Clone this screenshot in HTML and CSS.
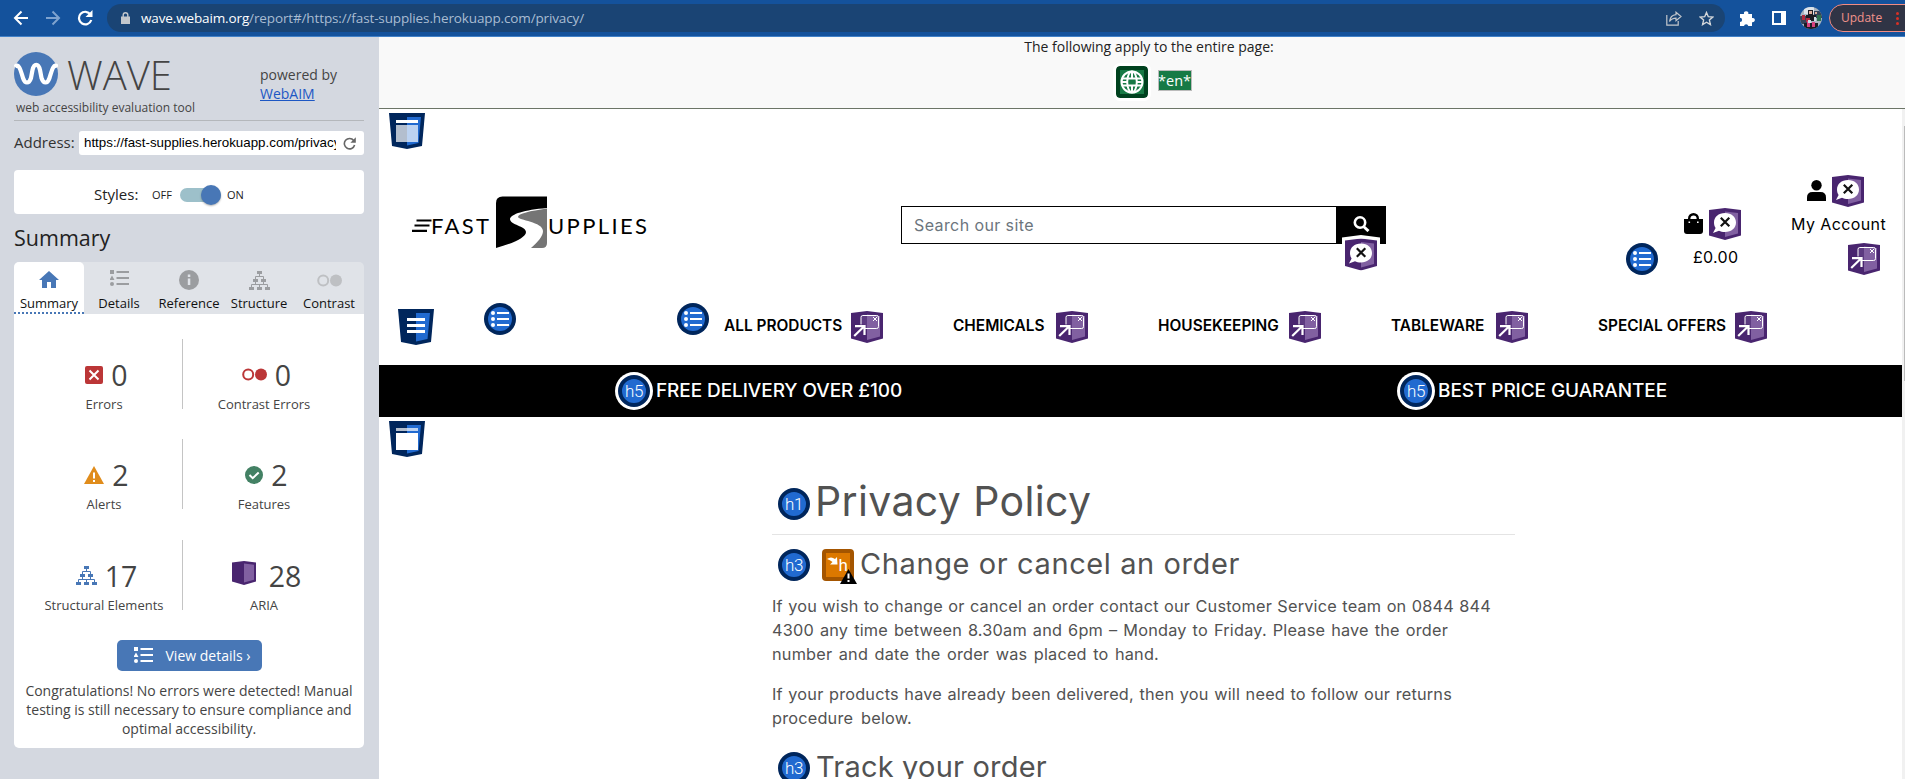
FILE: index.html
```html
<!DOCTYPE html>
<html lang="en">
<head>
<meta charset="utf-8">
<title>WAVE Report</title>
<link rel="stylesheet" href="styles.css">
</head>
<body>
<svg class="defs" width="0" height="0">
  <symbol id="speech" viewBox="0 0 32 32">
    <path fill="#49256f" d="M0 2 16 0l16 2v25.500L16 32 0 27.500z"/><path fill="#8160a1" d="M16 3.500 29 5v20.500L16 29z"/>
    <path fill="#fff" d="M16 5c6.500 0 11 4 11 9.500S22.500 24 16 24c-2.500 0-4.500-.5-6-1.300L4 25l2.600-5C5.500 18.500 5 16.500 5 14.500 5 9 9.500 5 16 5z"/>
    <path stroke="#111" stroke-width="2.200" d="m11.800 9.800 8.500 8.500m0-8.500-8.500 8.500"/>
  </symbol>
  <symbol id="link" viewBox="0 0 32 32">
    <path fill="#49256f" d="M0 2 16 0l16 2v25.500L16 32 0 27.500z"/><path fill="#8160a1" d="M16 3.500 29 5v20.500L16 29z"/>
    <rect x="10" y="4.500" width="17.500" height="13" rx="1.800" fill="#8160a1" fill-opacity=".35" stroke="#fff"/>
    <path fill="#49256f" d="M2.500 13.500H14v6h-3z"/>
    <path fill="none" stroke="#fff" stroke-width="1" d="m22 6 4 4m0-4-4 4"/>
    <path fill="none" stroke="#fff" stroke-width="2.200" d="M4 15.200h9.500V24M13 15.500 3.200 25"/>
  </symbol>
  <symbol id="list" viewBox="0 0 32 32">
    <circle cx="16" cy="16" r="16" fill="#00265c"/><circle cx="16" cy="16" r="12" fill="#216ad0"/>
    <path stroke="#fff" stroke-width="2" d="M13 10h12M13 16h12M13 22h12"/>
    <g fill="#fff"><circle cx="9" cy="10" r="2"/><circle cx="9" cy="16" r="2"/><circle cx="9" cy="22" r="2"/></g>
  </symbol>
  <symbol id="shield" viewBox="0 0 36 36">
    <path fill="#00265c" d="M0 0h36l-3 33-15 3-15-3z"/><path fill="#216ad0" d="M18 4h14l-2.500 26L18 32.500z"/>
  </symbol>
  <symbol id="tree" viewBox="0 0 21 19">
    <path fill="currentColor" d="M8 0h5v3H8zM4 8h5v3H4zM12 8h5v3h-5zM0 16h5v3H0zM8 16h5v3H8zM16 16h5v3h-5z"/>
    <path fill="none" stroke="currentColor" d="M10.500 3v2.500M6.500 8V5.500h8V8M6.500 11v2.500M14.500 11v2.500M2.500 16v-2.500h16V16M10.500 16v-2.500"/>
  </symbol>
  <symbol id="details" viewBox="0 0 19 16">
    <path fill="currentColor" d="M0 0h4v4H0zM2 5.500 4.500 10h-5zM6.500 1H19v2H6.500zM6.500 7H19v2H6.500zM6.500 13H19v2H6.500z"/><circle cx="2" cy="14" r="2" fill="currentColor"/>
  </symbol>
  <symbol id="pair" viewBox="0 0 25 13">
    <circle cx="6.200" cy="6.500" r="5" fill="none" stroke="currentColor" stroke-width="2"/><circle cx="19" cy="6.500" r="6" fill="currentColor"/>
  </symbol>
</svg>

<header class="chrome">
  <svg class="nav-btns" width="80" height="36" viewBox="0 0 80 36" fill="none" stroke-width="2">
    <path stroke="#fff" d="M28 18H15m6.500-6.500L15 18l6.500 6.500"/>
    <path stroke="#7fa3cf" d="M46 18h13m-6.500-6.500L59 18l-6.500 6.500"/>
  </svg>
  <svg class="reload" width="16" height="16" viewBox="0 0 16 16"><path fill="none" stroke="#fff" stroke-width="2.200" d="M13.500 4.500A6.300 6.300 0 1 0 14.300 10"/><path fill="#fff" d="M15.500 0v7h-7z"/></svg>
  <div class="omnibox">
    <svg width="9" height="12" viewBox="0 0 9 12"><path fill="#c3c7cc" d="M0 4.500h9V12H0z"/><path fill="none" stroke="#c3c7cc" stroke-width="1.400" d="M2.200 5V3a2.300 2.300 0 0 1 4.600 0v2"/></svg>
    <div class="url"><b>wave.webaim.org</b>/report#/https://fast-supplies.herokuapp.com/privacy/</div>
    <svg class="share" width="16" height="15" viewBox="0 0 16 15" fill="none" stroke="#c3c7cc" stroke-width="1.200"><path d="M.8 4v10.200h11.400V10"/><path d="M10 1.200 15 5.500l-5 4.300V7.200C7 7.200 5 8.200 3.500 10.500 4 7 6 4 10 3.700z"/></svg>
    <svg width="15" height="15" viewBox="0 0 15 15" fill="none" stroke="#d4d7da" stroke-width="1.400"><path d="m7.500 1.500 1.800 4.200 4.500.4-3.400 3 1 4.500-3.900-2.400-3.900 2.400 1-4.500-3.400-3 4.500-.4z"/></svg>
  </div>
  <svg class="puzzle" width="15" height="15" viewBox="0 0 15 15"><path fill="#fff" d="M0 3h4a2.200 2.200 0 1 1 4.300 0H12v4a2.200 2.200 0 1 1 0 4.200V15H8.300a2.200 2.200 0 0 0-4.300 0H0v-4a2.100 2.100 0 0 0 0-4.200z"/></svg>
  <svg class="panel-icon" width="14" height="14"><path fill="#fff" fill-rule="evenodd" d="M0 0h14v14H0zM2 2v10h7V2z"/></svg>
  <svg class="avatar" width="22" height="22" viewBox="0 0 22 22"><clipPath id="av"><circle cx="11" cy="11" r="11"/></clipPath><g clip-path="url(#av)"><path fill="#a9b4c0" d="M0 0h22v22H0z"/><path fill="#dde4ea" d="M4 0h10v7H4z"/><path fill="#35435a" d="M0 9h7v8H0zM14 4h8v7h-8z"/><path fill="#1d1c24" d="M8 3h5v6H8zM6 8h10v6H6zM4 16h14v6H4z"/><path fill="#b02a3e" d="M2 8h3v5H2zM6 11h4v4H6z"/><path fill="#d8427f" d="M7 14h3v6H7zM12 15h3v5h-3z"/><path fill="#2f7350" d="M17 8h4v6h-4z"/><path fill="#cfe0e8" d="M8 13h3v3H8zM14 10h2v4h-2z"/><path fill="#e0ac98" d="M9 4h3v3H9zM15 5h2v2h-2z"/></g></svg>
  <div class="update">Update <span class="dots"><i></i><i></i><i></i></span></div>
</header>

<div class="app">
<aside class="sidebar">
  <div class="brand">
    <div>
      <div class="brand-name">
        <svg width="44" height="44" viewBox="0 0 44 44"><circle cx="22" cy="22" r="22" fill="#4877b6"/><path fill="none" stroke="#fff" stroke-width="4.200" d="M1 15C5 10 7 20 9 26c2 6 6 6 8 0l1.500-8c1.500-7 6-7 7.500 0l1.500 8c2 6 6 6 8 0 2-6 4-16 8-11"/></svg>
        <span>WAVE</span>
      </div>
      <div class="tagline">web accessibility evaluation tool</div>
    </div>
    <div class="powered">powered by<br><a href="#">WebAIM</a></div>
  </div>
  <div class="address"><span>Address:</span>
    <div class="field"><span>https://fast-supplies.herokuapp.com/privacy/</span>
      <svg width="13" height="13" viewBox="0 0 13 13"><path fill="none" stroke="#666" stroke-width="1.600" d="M10.700 3.500A5.200 5.200 0 1 0 11.600 8"/><path fill="#666" d="M12.800.3v5.400H7.400z"/></svg></div>
  </div>
  <div class="styles-box"><span>Styles:</span><small>OFF</small><div class="toggle"><i></i></div><small>ON</small></div>
  <h2 class="title">Summary</h2>
  <nav class="tabs">
    <div class="tab active"><svg width="20" height="17" viewBox="0 0 20 17"><path fill="currentColor" d="M10 0 20 9h-3v8h-5v-6H8v6H3V9H0z"/></svg>Summary</div>
    <div class="tab"><svg class="up" width="19" height="16"><use href="#details"/></svg>Details</div>
    <div class="tab"><svg width="20" height="20"><circle cx="10" cy="10" r="10" fill="currentColor"/><path fill="#e0e3e8" d="M8.800 4.500h2.500V7H8.800zM8.800 8.500h2.500V15H8.800z"/></svg>Reference</div>
    <div class="tab"><svg width="21" height="19"><use href="#tree"/></svg>Structure</div>
    <div class="tab faint"><svg width="25" height="13"><use href="#pair"/></svg><span>Contrast</span></div>
  </nav>
  <section class="panel">
    <div class="counts">
      <div class="cell"><p><svg width="18" height="18"><rect width="18" height="18" rx="2" fill="#bb3637"/><path stroke="#fff" stroke-width="2" d="m4.500 4.500 9 9m0-9-9 9"/></svg>0</p>Errors</div>
      <div class="cell"><p><svg class="red" width="25" height="13"><use href="#pair"/></svg>0</p>Contrast Errors</div>
      <div class="cell"><p><svg width="20" height="18"><path fill="#e08c1b" d="m10 0 10 18H0z"/><path stroke="#fff" stroke-width="2" d="M10 6.500v6M10 14v2"/></svg>2</p>Alerts</div>
      <div class="cell"><p><svg width="18" height="18"><circle cx="9" cy="9" r="9" fill="#438164"/><path fill="none" stroke="#fff" stroke-width="2" d="m4.500 9 3.200 3.200 6-5.700"/></svg>2</p>Features</div>
      <div class="cell"><p><svg class="blue" width="21" height="19"><use href="#tree"/></svg>17</p>Structural Elements</div>
      <div class="cell"><p><svg class="aria" width="24" height="24"><path fill="#49256f" d="m0 1.500 12-1.500 12 1.500v19L12 24 0 20.500z"/><path fill="#8160a1" d="m12 2.600 10 1.200v15L12 21.500z"/></svg>28</p>ARIA</div>
    </div>
    <button class="view"><svg width="19" height="16"><use href="#details"/></svg>View details ›</button>
    <p class="congrats">Congratulations! No errors were detected! Manual testing is still necessary to ensure compliance and optimal accessibility.</p>
  </section>
</aside>

<main class="report">
  <div class="entire">
    <div class="entire-text">The following apply to the entire page:</div>
    <div class="entire-icons">
      <svg class="globe" width="32" height="32" fill="none" stroke="#fff" stroke-width="2"><rect width="32" height="32" rx="4" fill="#00421f" stroke="none"/><path fill="#177a45" stroke="none" d="M4 4h24v24H4z"/><circle cx="16" cy="16" r="10.500"/><ellipse cx="16" cy="16" rx="4.800" ry="10.500"/><path d="M16 5v6.500M16 20.500V27M6 16h5M21 16h5M7 12.500h18M7 19.500h18"/></svg>
      <span class="lang">*en*</span>
    </div>
  </div>
  <div class="page">
    <div class="site">
      <svg class="shield-top" width="36" height="36"><use href="#shield"/><path fill="#fff" d="M7 7h22v3H7z"/><path fill="#fff" fill-opacity=".7" d="M7 12h22v17H7z"/></svg>
      <div class="shop">
        <svg class="logo" width="236" height="53" viewBox="0 0 236 53">
          <path stroke="#000" stroke-width="2.200" d="M4.500 24.500H19.500M2.500 29.500H17.500M0 34.800H15"/>
          <g class="logo-text"><text x="19" y="38" textLength="58">FAST</text><text x="136" y="38" textLength="99">UPPLIES</text></g>
          <path d="M84 7q0-6.500 6.500-6.500H135V52H84z"/>
          <path fill="#fff" d="M135 12C112 14 99 18 98 23c0 6 16 7 16 13 0 6-15 12-30 16h51z"/>
          <path fill="#757575" d="M135 12.500C118 15 106 17.500 106 21c0 3 25 5 25 14 0 5-5 11-12 17h11q5 0 5-5z"/>
        </svg>
        <div class="search">
          <div class="search-input">Search our site</div>
          <div class="search-btn"><svg width="17" height="16"><circle cx="7" cy="6.500" r="5.200" fill="none" stroke="#fff" stroke-width="2.600"/><path stroke="#fff" stroke-width="3" d="m10.500 10.500 5 4.500"/></svg>
            <svg class="search-badge" width="38" height="39" viewBox="-3 -3.500 38 39"><path fill="#fff" d="M-3-1 16-3.500 35-1v30L16 35.500-3 29z"/><use href="#speech" width="32" height="32"/></svg></div>
        </div>
        <svg class="cart-list" width="32" height="32"><use href="#list"/></svg>
        <div class="cart">
          <div class="icons"><svg class="bag" width="19" height="21"><path d="M0 6h19v12q0 3-3 3H3q-3 0-3-3z"/><path fill="none" stroke="#000" stroke-width="2.400" d="M5.200 9V5.500a4.300 4.300 0 0 1 8.600 0V9"/><path fill="#fff" d="M4.500 8.500h1.600v1.600H4.500zM13 8.500h1.600v1.600H13z"/></svg><svg width="32" height="32"><use href="#speech"/></svg></div>
          <div class="price">£0.00</div>
        </div>
        <div class="account">
          <div class="icons"><svg width="19" height="21"><circle cx="9.500" cy="5.200" r="5.200"/><path d="M0 21v-3.500Q0 12 5.500 12h8q5.500 0 5.500 5.500V21z"/></svg><svg width="32" height="32"><use href="#speech"/></svg></div>
          <div class="my">My Account</div>
          <svg class="account-link" width="32" height="32"><use href="#link"/></svg>
        </div>
      </div>
      <nav class="menu">
        <svg class="menu-shield" width="36" height="36"><use href="#shield"/><path stroke="#fff" stroke-width="3" d="M9 10.500h18M9 16.500h18M9 22.500h18"/></svg>
        <svg class="list-a" width="32" height="32"><use href="#list"/></svg>
        <svg class="list-b" width="32" height="32"><use href="#list"/></svg>
        <div class="items">
          <a class="w1">ALL PRODUCTS<svg width="32" height="32"><use href="#link"/></svg></a>
          <a class="w2">CHEMICALS<svg width="32" height="32"><use href="#link"/></svg></a>
          <a class="w3">HOUSEKEEPING<svg width="32" height="32"><use href="#link"/></svg></a>
          <a class="w4">TABLEWARE<svg width="32" height="32"><use href="#link"/></svg></a>
          <a class="w5">SPECIAL OFFERS<svg width="32" height="32"><use href="#link"/></svg></a>
        </div>
      </nav>
      <div class="promo">
        <div><span class="hb ring">h5</span><span>FREE DELIVERY OVER £100</span></div>
        <div><span class="hb ring">h5</span><span>BEST PRICE GUARANTEE</span></div>
      </div>
      <svg class="shield-main" width="36" height="36"><use href="#shield"/><path fill="#fff" fill-opacity=".7" d="M7 7h22v3H7z"/><path fill="#fff" d="M7 12h22v17H7z"/></svg>
      <article class="policy">
        <h1><span class="hb">h1</span><span>Privacy Policy</span></h1>
        <h3><span class="hb">h3</span><svg class="skip" width="35" height="35"><rect width="32" height="32" rx="4" fill="#a45500"/><path fill="#dc7800" d="M4 4h24v24H4z"/><path fill="#fff" d="M5 10q4-3 8 0l2-2 .5 7.500H8l2.500-2.500Q8 11 5 10z"/><text x="16.500" y="22" class="skip-h">h</text><path d="M26.500 20 35 35H18z"/><path stroke="#fff" stroke-width="2" d="M26.500 24.500v5M26.500 31v2"/></svg><span class="change">Change or cancel an order</span></h3>
        <p><span class="l1">If you wish to change or cancel an order contact our Customer Service team on 0844 844</span><span class="l2">4300 any time between 8.30am and 6pm – Monday to Friday. Please have the order</span><span class="l3">number and date the order was placed to hand.</span></p>
        <p class="last"><span class="l4">If your products have already been delivered, then you will need to follow our returns</span><span class="l5">procedure below.</span></p>
        <h3><span class="hb">h3</span><span class="track">Track your order</span></h3>
      </article>
    </div>
    <div class="scroll"><i></i></div>
  </div>
</main>
</div>
</body>
</html>
```
FILE: styles.css
```css
* { box-sizing: border-box; }
body { margin: 0; width: 1905px; height: 779px; overflow: hidden; font-family: "Open Sans", "Noto Sans", sans-serif; background: #fff; }
svg { display: block; flex: none; }
p, h1, h2, h3 { margin: 0; font-weight: 400; }
.defs { position: absolute; }

/* browser toolbar */
.chrome { height: 37px; display: flex; align-items: center; background: #14529c; border-bottom: 1px solid #4181c8; overflow: hidden; }
.nav-btns { margin-right: -3px; }
.reload { margin-bottom: 1px; }
.omnibox { margin-left: 14px; width: 1618px; flex: none; height: 28px; border-radius: 14px; background: #1a4474; display: flex; align-items: center; padding: 0 11px 0 14px; }
.url { margin-left: 11px; flex: 1; font-size: 13.500px; color: #a9bcd2; letter-spacing: -.13px; white-space: nowrap; }
.url b { font-weight: 400; color: #fff; }
.share { margin-right: 17px; }
.puzzle { margin-left: 15px; }
.panel-icon { margin-left: 17px; }
.avatar { margin-left: 14px; }
.update { margin-left: 7px; height: 28px; width: 90px; flex: none; border: 1.500px solid #f28b82; border-radius: 14px; background: #303445; color: #f0938b; font-size: 12px; line-height: 25px; padding-left: 11px; display: flex; }
.dots { margin: 7px 0 0 14px; display: flex; flex-direction: column; gap: 2px; }
.dots i { width: 3px; height: 3px; border-radius: 2px; background: #d93025; }

.app { display: flex; height: 742px; }

/* sidebar */
.sidebar { width: 379px; flex: none; background: #d4d8e0; padding: 13px 15px 0 14px; color: #111; }
.brand { display: flex; height: 71px; border-bottom: 1px solid #b4b7bb; color: #444; }
.brand > div:first-child { width: 246px; }
.brand-name { display: flex; height: 48px; line-height: 48px; font-size: 40px; font-weight: 300; }
.brand-name svg { margin: 2px 9px 0 0; }
.brand-name span { padding-top: 1px; }
.tagline { font-size: 12px; line-height: 20px; padding-left: 2px; white-space: nowrap; }
.powered { padding-top: 15px; font-size: 14px; line-height: 19px; }
.powered a { color: #1d57c4; }
.address { display: flex; margin-top: 10px; height: 24px; line-height: 22px; font-size: 15px; justify-content: space-between; color: #333; }
.field { width: 285px; background: #fff; border-radius: 3px; padding: 0 8px 0 5px; display: flex; align-items: center; justify-content: space-between; }
.field span { width: 252px; overflow: hidden; white-space: nowrap; font: 13.333px/24px "Liberation Sans", Arial, sans-serif; color: #000; }
.styles-box { margin-top: 15px; height: 44px; background: #fff; border-radius: 4px; padding: 5px 0 0 80px; display: flex; align-items: center; font-size: 15px; color: #222; }
.styles-box small { font-size: 11px; margin-bottom: 1px; }
.styles-box span { width: 58px; margin-bottom: 2px; }
.toggle { width: 41px; height: 14px; margin: 0 6px 0 8px; border-radius: 7px; background: #9dc0ca; display: flex; justify-content: flex-end; align-items: center; }
.toggle i { width: 20px; height: 20px; border-radius: 50%; background: #4877b6; box-shadow: 0 1px 2px rgba(0,0,0,.3); }
.title { margin-top: 9px; height: 39px; line-height: 30px; font-size: 21.500px; color: #222; }
.tabs { display: flex; height: 52px; background: #e0e3e8; border-radius: 5px 5px 0 0; }
.tab { width: 70px; height: 52px; display: grid; grid-template-rows: 33px 16px; justify-items: center; align-items: center; font-size: 13px; line-height: 16px; color: #9b9da0; -webkit-text-fill-color: #111; white-space: nowrap; align-content: start; }
.tab.active { background: #fff; border-radius: 5px 5px 0 0; border-bottom: 2px dotted #4877b6; color: #4877b6; }
.tab svg { margin-top: 3px; }
.tab.active svg { margin-top: 1px; }
.tab .up { margin-top: -1px; }
.tab.faint { color: #bec0c3; }
.panel { height: 434px; background: #fff; border-radius: 0 0 5px 5px; padding: 25px 8px 0; text-align: center; color: #444; }
.counts { display: grid; grid-template-columns: 157px 162px; grid-template-rows: 100px 101px 100px; margin-left: 4px; height: 301px; }
.cell { height: 70px; padding-top: 15px; font-size: 13px; line-height: 18px; white-space: nowrap; }
.cell:nth-child(odd) { border-right: 1px solid #c4c4c4; }
.cell p { display: flex; justify-content: center; align-items: center; gap: 8px; height: 41px; line-height: 40px; font-size: 28.500px; padding-left: 5px; }
.cell .aria { margin: -6px 5px 0 0; }
.red { color: #bb3637; } .blue { color: #4877b6; }
.view { width: 145px; height: 31px; margin: 0 auto; border: 0; border-radius: 5px; background: #4877b6; color: #fff; font: 14px "Open Sans", sans-serif; display: flex; align-items: center; padding: 0 0 1px 17px; gap: 13px; white-space: nowrap; }
.congrats { margin-top: 10px; font-size: 14px; line-height: 19px; }

/* report header */
.report { flex: 1; min-width: 0; }
.entire { height: 72px; background: #f9f9f9; border-bottom: 1px solid #6c7567; color: #222; text-align: center; }
.entire-text { font-size: 14px; line-height: 20px; padding-left: 14px; }
.entire-icons { display: flex; justify-content: center; gap: 10px; margin-top: 9px; padding-left: 23px; }
.globe { border-radius: 4px; box-shadow: 0 0 0 3px #fff; }
.lang { width: 34px; height: 21px; margin-top: 4px; border: 1px solid #bbb; background: #177a45; color: #fff; font-size: 14.500px; line-height: 19px; display: flex; justify-content: center; }
.page { display: flex; height: 670px; }
.site { width: 1523px; flex: none; font-family: Inter, "Open Sans", sans-serif; color: #000; }
.scroll { width: 3px; padding: 17px 0 0 2px; background: #f1f1f1; }
.scroll i { display: block; height: 255px; background: #bbb; }
.shield-top { margin: 4px 0 0 10px; }
.shop { display: flex; align-items: flex-start; height: 154px; }
.logo { margin: 47px 0 0 33px; }
.logo-text { font: 22px Lato, sans-serif; }
.search { margin: 57px 0 0 253px; width: 485px; height: 38px; border: 1px solid #000; display: flex; }
.search-input { width: 434px; flex: none; padding-left: 12px; line-height: 37px; font-size: 16px; color: #6c757d; letter-spacing: .4px; }
.search-btn { position: relative; flex: 1; background: #000; padding: 9px 0 0 17px; }
.search-badge { position: absolute; left: 6px; top: 28px; }
.cart-list { margin: 94px 0 0 240px; }
.cart { margin: 59px 0 0 26px; width: 57px; }
.icons { display: flex; align-items: flex-start; gap: 6px; }
.icons svg:first-child { margin-top: 5px; }
.price { margin-top: 3px; padding-left: 9px; line-height: 28px; font-size: 16px; letter-spacing: .3px; }
.account { margin: 26px 0 0 50px; width: 96px; white-space: nowrap; }
.account .icons { padding-left: 16px; }
.my { height: 28px; line-height: 28px; margin-top: 3px; font-size: 16px; letter-spacing: .4px; }
.account-link { margin: 5px 0 0 57px; }
.menu { display: flex; align-items: flex-start; height: 62px; }
.menu-shield { margin: 6px 0 0 19px; }
.list-a { margin-left: 50px; }
.list-b { margin-left: 161px; }
.items { display: flex; margin: 8px 0 0 15px; gap: 70px; }
.items a { display: flex; justify-content: space-between; line-height: 30px; height: 32px; font-size: 15.400px; font-weight: 600; white-space: nowrap; }
.w1 { width: 159px; } .w2 { width: 135px; } .w3 { width: 163px; } .w4 { width: 137px; } .w5 { width: 169px; }
.promo { height: 52px; background: #000; color: #fff; display: flex; font-size: 19px; font-weight: 500; line-height: 52px; white-space: nowrap; letter-spacing: -.08px; }
.promo > div { width: 782px; padding-left: 239px; display: flex; gap: 6px; flex: none; }
.promo > div:last-child { width: 741px; }
.hb { width: 32px; height: 32px; flex: none; border: 4px solid #00265c; border-radius: 50%; background: #216ad0; color: #fff; display: flex; justify-content: center; align-items: center; font: 350 17px/24px Roboto, sans-serif; letter-spacing: -.3px; }
.ring { margin: 10px 0 0 0; box-shadow: 0 0 0 3px #fff; }
.shield-main { margin: 4px 0 0 10px; }
.policy { margin: 22px 0 0 393px; width: 743px; color: #525252; white-space: nowrap; }
.policy h1 { height: 56px; display: flex; padding-left: 6px; border-bottom: 1px solid #e4e4e4; font-size: 41px; line-height: 45px; gap: 5px; letter-spacing: .36px; }
.policy h1 .hb { margin-top: 9px; letter-spacing: -.3px; }
.policy h3 { height: 44px; display: flex; padding-left: 6px; font-size: 29px; line-height: 29px; }
.policy h1 + h3 { margin-top: 14px; }
.skip { margin: 0 3px 0 12px; }
.skip-h { font: 17px Roboto, sans-serif; fill: #fff; }
.change { letter-spacing: .6px; }
.track { margin-left: 6px; letter-spacing: .2px; }
.policy p { font-size: 16.300px; line-height: 24px; margin-bottom: 16px; letter-spacing: .2px; }
.policy p.last { margin-bottom: 22px; }
.policy p span { display: block; text-align-last: justify; }
.policy h3 + p { margin-top: 1px; }
.l1 { width: 719px; } .l2 { width: 676px; } .l3 { width: 387px; } .l4 { width: 680px; } .l5 { width: 140px; }
```
